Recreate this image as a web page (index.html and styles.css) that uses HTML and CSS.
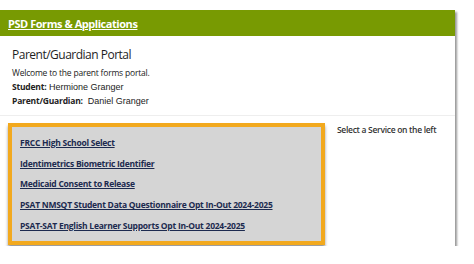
FILE: index.html
```html
<!DOCTYPE html>
<html lang="en">
<head>
  <meta charset="UTF-8" />
  <meta name="viewport" content="width=device-width, initial-scale=1.0" />
  <title>PSD Forms &amp; Applications</title>
  <link rel="stylesheet" href="styles.css">
</head>
<body>

<div class="panel">
  <header class="panel-head">
    <a href="#">PSD Forms &amp; Applications</a>
  </header>

  <section class="intro">
    <h1>Parent/Guardian Portal</h1>
    <p class="welcome">Welcome to the parent forms portal.</p>
    <p class="who"><b>Student:</b> Hermione Granger</p>
    <p class="who"><b>Parent/Guardian:</b>&nbsp; Daniel Granger</p>
  </section>

  <section class="services">
    <ul class="service-list">
      <li><a href="#">FRCC High School Select</a></li>
      <li><a href="#">Identimetrics Biometric Identifier</a></li>
      <li><a href="#">Medicaid Consent to Release</a></li>
      <li><a href="#">PSAT NMSQT Student Data Questionnaire Opt In-Out 2024-2025</a></li>
      <li><a href="#">PSAT-SAT English Learner Supports Opt In-Out 2024-2025</a></li>
    </ul>
    <div class="service-view">Select a Service on the left</div>
  </section>
</div>

</body>
</html>
```

FILE: styles.css
```css
:root {
  --green: #789a02;
  --gold: #f2a91e;
  --list-bg: #d5d5d5;
  --link: #1c2a4f;
  --text-main: #222;
}

* {
  margin: 0;
  padding: 0;
  box-sizing: border-box;
}

body {
  font-family: 'Open Sans', sans-serif;
  background: #fff;
  color: var(--text-main);
}

.panel {
  width: 455px;
  height: 236px;
  margin-top: 10px;
  background: #fff;
  box-shadow: 2px 2px 2px #9a9a9a;
}

.panel-head {
  background: var(--green);
  height: 26px;
  padding-left: 8px;
  display: flex;
  align-items: center;
}

.panel-head a {
  color: #fff;
  font-weight: 700;
  font-size: 11px;
  letter-spacing: -0.45px;
  text-decoration: underline;
  margin-top: 1px;
}

.intro {
  padding: 10px 12px 0;
  height: 80px;
  border-bottom: 1px solid #eee;
}

.intro h1 {
  font-size: 12px;
  font-weight: 400;
  letter-spacing: -0.5px;
  color: #1e1e1e;
  line-height: 17px;
}

.welcome {
  font-size: 8.5px;
  letter-spacing: -0.2px;
  line-height: 14px;
  margin-top: 3px;
}

.who {
  font-family: 'Liberation Sans', Arial, sans-serif;
  font-size: 9px;
  line-height: 14px;
}

.who b {
  font-family: 'Open Sans', sans-serif;
  font-size: 8.5px;
  letter-spacing: -0.2px;
}

.services {
  display: flex;
  align-items: flex-start;
  padding: 7px 0 0 8px;
}

.service-list {
  list-style: none;
  width: 317px;
  height: 122px;
  background: var(--list-bg);
  border: 4px solid var(--gold);
  box-shadow: 0 3px 3px #999;
  padding: 6px 0 0 8px;
}

.service-list li {
  font-size: 8.5px;
  line-height: 20.7px;
}

.service-list a {
  color: var(--link);
  font-weight: 700;
  letter-spacing: -0.25px;
  text-decoration: underline;
}

.service-view {
  margin-left: 12px;
  font-size: 8.5px;
  font-weight: 600;
  letter-spacing: -0.3px;
  color: #333;
  line-height: 14px;
}
```
